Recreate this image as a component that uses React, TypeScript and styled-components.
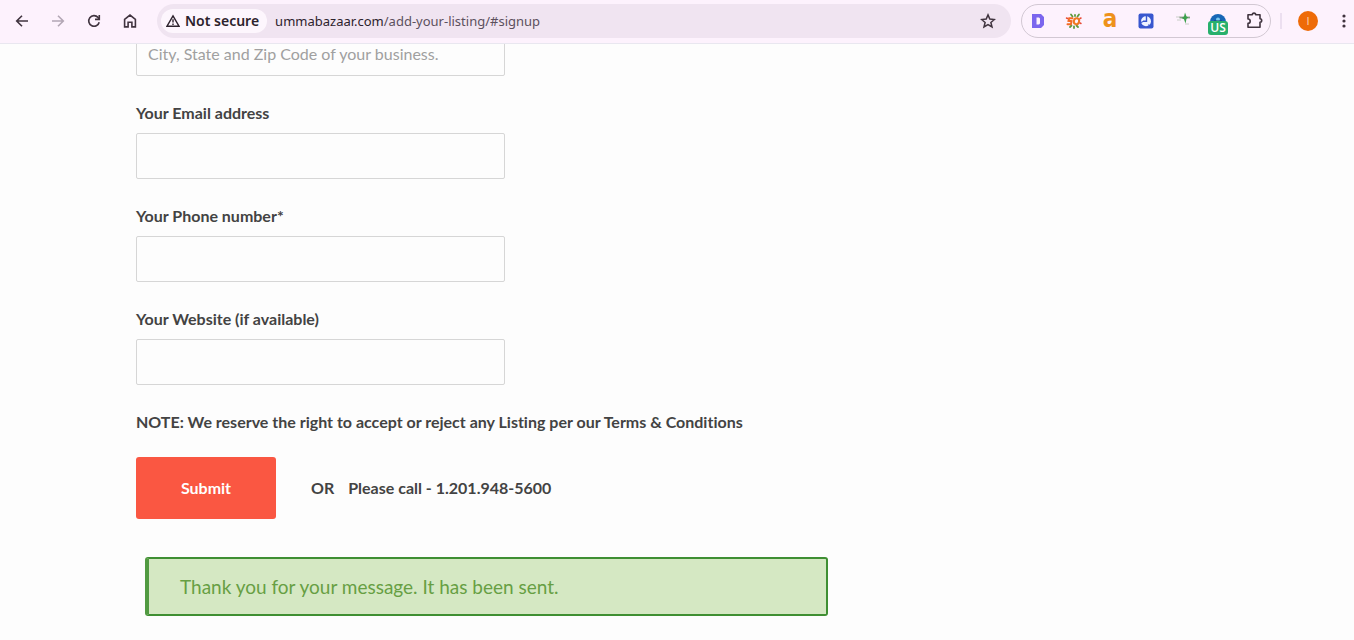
import React from "react";
import styled, { createGlobalStyle } from "styled-components";

const GlobalStyle = createGlobalStyle`
  * { box-sizing: border-box; }
  html, body, #root { height: 100%; }
  body {
    margin: 0;
    background: #fdfdfd;
    color: #434343;
    font-family: Lato, "Liberation Sans", sans-serif;
    font-size: 16px;
    font-variant-ligatures: none;
    line-height: 24px;
  }
`;

const Shell = styled.div`
  display: flex;
  flex-direction: column;
  height: 100%;
`;

const Toolbar = styled.header`
  display: flex;
  align-items: center;
  flex: none;
  height: 44px;
  padding: 0 0 1px 8px;
  background: #fdf2fd;
  border-bottom: 1px solid #e9e7f0;
  font-family: "Noto Sans", "Open Sans", sans-serif;
`;

const NavGroup = styled.nav`
  display: flex;
  gap: 8px;
  margin-right: 13px;
`;

const IconButton = styled.button<{ $faded?: boolean; $width?: number }>`
  display: grid;
  place-items: center;
  width: ${(p) => p.$width ?? 28}px;
  height: 28px;
  padding: 0;
  border: 0;
  background: transparent;
  color: ${(p) => (p.$faded ? "#b3a7b5" : "#40343f")};
  font: inherit;
`;

const AddressBar = styled.div`
  display: flex;
  align-items: center;
  flex: 1;
  min-width: 0;
  height: 34px;
  padding: 0 9px 0 4px;
  border-radius: 17px;
  background: #f0e4f1;
`;

const SecurityChip = styled.button`
  display: flex;
  align-items: center;
  gap: 5px;
  flex: none;
  height: 24px;
  padding: 0 8px 0 5px;
  border: 0;
  border-radius: 12px;
  background: #fdf6fd;
  color: #2c222c;
  font: 600 14px/20px "Noto Sans", "Open Sans", sans-serif;
`;

const UrlText = styled.div`
  flex: 1;
  min-width: 0;
  margin-left: 8px;
  overflow: hidden;
  color: #5c505d;
  font-size: 13px;
  line-height: 20px;
  white-space: nowrap;

  b {
    color: #2c222c;
    font-weight: 400;
  }
`;

const Extensions = styled.div`
  display: flex;
  align-items: center;
  justify-content: space-between;
  flex: none;
  width: 250px;
  height: 34px;
  margin-left: 10px;
  padding: 0 2px;
  border: 1px solid #d2c8d3;
  border-radius: 17px;
`;

const Glyph = styled.span`
  padding-bottom: 4px;
  color: #ee921b;
  font: 700 24px/20px "DejaVu Sans Condensed", "DejaVu Sans", sans-serif;
`;

const BadgedIcon = styled.span`
  position: relative;
  display: grid;
  place-items: center;
`;

const Badge = styled.span`
  position: absolute;
  top: 8px;
  left: 50%;
  width: 20px;
  height: 14px;
  margin-left: -10px;
  border-radius: 3px;
  background: #27b06c;
  color: #fff;
  font: 600 12px/14px "Open Sans", sans-serif;
  text-align: center;
`;

const Divider = styled.span`
  width: 2px;
  height: 16px;
  margin: 0 16px 0 9px;
  background: #ecdff0;
`;

const Avatar = styled.button`
  width: 20px;
  height: 20px;
  padding: 0;
  border: 0;
  border-radius: 50%;
  background: #ee6b08;
  color: #fbd9b8;
  font: 400 11px/20px "Open Sans", sans-serif;
`;

const MenuButton = styled(IconButton)`
  margin-left: 16px;
`;

const Viewport = styled.main`
  flex: 1;
  min-height: 0;
  overflow: hidden;
`;

const Form = styled.form`
  width: calc(100% - 32px);
  max-width: 1082px;
  margin: -14px auto 0;
`;

const Field = styled.div`
  margin-bottom: 25px;
`;

const Label = styled.label`
  display: block;
  margin-bottom: 8px;
  font-weight: 700;
`;

const TextInput = styled.input`
  display: block;
  width: 369px;
  max-width: 100%;
  height: 46px;
  padding: 0 11px;
  border: 1px solid #d6d6d6;
  border-radius: 2px;
  background: #fdfdfd;
  color: inherit;
  font: inherit;

  &::placeholder {
    color: #a0a0a0;
    opacity: 1;
  }
`;

const Note = styled.p`
  margin: 0 0 23px;
  font-weight: 700;
`;

const Actions = styled.div`
  display: flex;
  align-items: center;
  margin-bottom: 38px;
  font-weight: 700;
`;

const SubmitButton = styled.button`
  width: 140px;
  height: 62px;
  margin-right: 35px;
  border: 0;
  border-radius: 3px;
  background: #fa5742;
  color: #fff;
  font: inherit;
`;

const CallText = styled.span`
  margin-left: 14px;
`;

const Alert = styled.div`
  max-width: 683px;
  margin-left: 9px;
  padding: 16px 31px 15px;
  border: 2px solid #3f8f33;
  border-left: 4px solid #519a41;
  border-radius: 3px;
  background: #d5e8c3;
  color: #679f43;
  font-size: 19px;
`;

const stroke = { fill: "none", stroke: "currentColor", strokeWidth: 1.6 };

const BackIcon = () => (
  <svg width="16" height="16" viewBox="0 0 16 16" {...stroke}>
    <path d="M14 8H3M8 2.700 2.700 8 8 13.300" />
  </svg>
);

const ForwardIcon = () => (
  <svg width="16" height="16" viewBox="0 0 16 16" {...stroke}>
    <path d="M2 8h11M8 2.700 13.300 8 8 13.300" />
  </svg>
);

const ReloadIcon = () => (
  <svg width="16" height="16" viewBox="0 0 16 16" {...stroke}>
    <path d="M13.200 9.200A5.300 5.300 0 1 1 12 4.400L13.200 6" />
    <path d="M13.300 2v4.400H9" />
  </svg>
);

const HomeIcon = () => (
  <svg width="16" height="16" viewBox="0 0 16 16" {...stroke}>
    <path d="M2.600 6.400 8 2.100l5.400 4.300v7.500H9.900V9.200H6.100v4.700H2.600z" />
  </svg>
);

const WarningIcon = () => (
  <svg width="14" height="14" viewBox="0 0 14 14" fill="none" stroke="currentColor" strokeWidth="1.4">
    <path d="M7 1.800 13 12.200H1z" />
    <path d="M7 5.200v3.400M7 9.500v1.400" />
  </svg>
);

const StarIcon = () => (
  <svg width="16" height="16" viewBox="0 0 16 16" fill="none" stroke="currentColor" strokeWidth="1.5">
    <path d="m8 1.900 1.800 4.200 4.600.4-3.500 3 1.100 4.500L8 11.600 4 14l1.100-4.500-3.500-3 4.600-.4z" />
  </svg>
);

const BlockDIcon = () => (
  <svg width="14" height="16" viewBox="0 0 14 16">
    <path fill="#7b66ee" fillRule="evenodd" d="M1 1h9l3 3v8l-3 3H1zM5.500 4.500v7H8l1-1v-5l-1-1z" />
  </svg>
);

const SunIcon = () => (
  <svg width="18" height="18" viewBox="0 0 18 18">
    <g fill="none" strokeLinecap="round">
      <path stroke="#5f9a3d" strokeWidth="1.8" d="m6 2.500 1.500 2M10 3v1M14 2.500l-1.500 2M5 15l1.500-1.500M9 16v-1.500M13 15l-1.500-1.500" />
      <path stroke="#f26b24" strokeWidth="2" d="M7.500 6.200H4.200L3.500 8.800l3 .4-.6 3H2.500" />
      <ellipse cx="11.500" cy="9.200" rx="2.600" ry="3" stroke="#f07a22" strokeWidth="2" transform="rotate(15 11.500 9.200)" />
      <path stroke="#e84b35" strokeWidth="1.5" d="m15 6.500 1-.5M1.500 6l1 .5M15 11l1 .5" />
    </g>
  </svg>
);

const ClockIcon = () => (
  <svg width="16" height="16" viewBox="0 0 16 16">
    <rect x="0.500" y="0.500" width="15" height="15" rx="2" fill="#3857cf" />
    <circle cx="8" cy="8.200" r="5" fill="#eef2ff" />
    <path d="M8.500 2.500v5.700H5" fill="none" stroke="#3857cf" strokeWidth="1.400" />
    <path d="M3 9.500 5 8.500M10.500 11.500l1.500 2" fill="none" stroke="#3857cf" strokeWidth="1.200" />
  </svg>
);

const SparkIcon = () => (
  <svg width="18" height="18" viewBox="0 0 18 18">
    <path d="M3 5h4M4 8h4M12 12h4" stroke="#e3e0e2" strokeWidth="2" />
    <path d="M6.500 5.500H17" stroke="#879c87" strokeWidth="1.800" />
    <path d="M12 .5 13.500 4.500l2 1-2 1.200-1 4.800-1.500-4.300L8.500 6 11 4.500z" fill="#3ba04b" />
  </svg>
);

const VpnIcon = () => (
  <svg width="18" height="16" viewBox="0 0 18 16">
    <path fill="#1767b6" d="M1 9a8 8 0 0 1 16 0z" />
    <circle cx="9" cy="6.500" r="2" fill="#77c8ed" />
    <path fill="#16406c" d="M5 7.500h8v3H5z" />
  </svg>
);

const PuzzleIcon = () => (
  <svg width="20" height="18" viewBox="0 0 20 18" {...stroke}>
    <path
      strokeLinejoin="round"
      d="M4 2.800h4.300a1.700 1.700 0 0 1 3.400 0h4.300v4a1.700 1.700 0 0 1 0 3.400v5H4v-3.800a2.200 2.200 0 0 0 0-4.400z"
    />
  </svg>
);

const DotsIcon = () => (
  <svg width="4" height="16" viewBox="0 0 4 16" fill="currentColor">
    <circle cx="2" cy="3" r="1.600" />
    <circle cx="2" cy="8" r="1.600" />
    <circle cx="2" cy="13" r="1.600" />
  </svg>
);

const fields = [
  { id: "email", label: "Your Email address", type: "email" },
  { id: "phone", label: "Your Phone number*", type: "tel" },
  { id: "website", label: "Your Website (if available)", type: "url" },
];

export default function App() {
  return (
    <Shell>
      <GlobalStyle />
      <Toolbar>
        <NavGroup aria-label="Browser navigation">
          <IconButton aria-label="Back"><BackIcon /></IconButton>
          <IconButton aria-label="Forward" $faded><ForwardIcon /></IconButton>
          <IconButton aria-label="Reload"><ReloadIcon /></IconButton>
          <IconButton aria-label="Home"><HomeIcon /></IconButton>
        </NavGroup>
        <AddressBar>
          <SecurityChip>
            <WarningIcon />
            Not secure
          </SecurityChip>
          <UrlText>
            <b>ummabazaar.com</b>/add-your-listing/#signup
          </UrlText>
          <IconButton aria-label="Bookmark this page"><StarIcon /></IconButton>
        </AddressBar>
        <Extensions>
          <IconButton aria-label="Extension D"><BlockDIcon /></IconButton>
          <IconButton aria-label="Extension SO"><SunIcon /></IconButton>
          <IconButton aria-label="Extension a"><Glyph>a</Glyph></IconButton>
          <IconButton aria-label="Clock extension"><ClockIcon /></IconButton>
          <IconButton aria-label="Spark extension"><SparkIcon /></IconButton>
          <IconButton aria-label="VPN extension">
            <BadgedIcon>
              <VpnIcon />
              <Badge>US</Badge>
            </BadgedIcon>
          </IconButton>
          <IconButton aria-label="Extensions"><PuzzleIcon /></IconButton>
        </Extensions>
        <Divider />
        <Avatar aria-label="Profile">I</Avatar>
        <MenuButton aria-label="Menu" $width={20}><DotsIcon /></MenuButton>
      </Toolbar>
      <Viewport>
        <Form onSubmit={(event) => event.preventDefault()}>
          <Field>
            <TextInput
              type="text"
              aria-label="City, State and Zip Code"
              placeholder="City, State and Zip Code of your business."
            />
          </Field>
          {fields.map(({ id, label, type }) => (
            <Field key={id}>
              <Label htmlFor={id}>{label}</Label>
              <TextInput id={id} type={type} />
            </Field>
          ))}
          <Note>NOTE: We reserve the right to accept or reject any Listing per our Terms &amp; Conditions</Note>
          <Actions>
            <SubmitButton type="submit">Submit</SubmitButton>
            <span>OR</span>
            <CallText>Please call - 1.201.948-5600</CallText>
          </Actions>
          <Alert role="status">Thank you for your message. It has been sent.</Alert>
        </Form>
      </Viewport>
    </Shell>
  );
}
